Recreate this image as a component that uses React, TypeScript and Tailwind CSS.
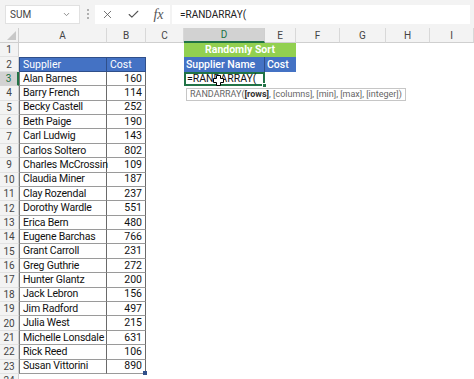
import React from "react";
import { X, Check, ChevronDown } from "lucide-react";

const suppliers: [string, number][] = [
  ["Alan Barnes", 160],
  ["Barry French", 114],
  ["Becky Castell", 252],
  ["Beth Paige", 190],
  ["Carl Ludwig", 143],
  ["Carlos Soltero", 802],
  ["Charles McCrossin", 109],
  ["Claudia Miner", 187],
  ["Clay Rozendal", 237],
  ["Dorothy Wardle", 551],
  ["Erica Bern", 480],
  ["Eugene Barchas", 766],
  ["Grant Carroll", 231],
  ["Greg Guthrie", 272],
  ["Hunter Glantz", 200],
  ["Jack Lebron", 156],
  ["Jim Radford", 497],
  ["Julia West", 215],
  ["Michelle Lonsdale", 631],
  ["Rick Reed", 106],
  ["Susan Vittorini", 890],
];

const columns = ["A", "B", "C", "D", "E", "F", "G", "H", "I"];

const font = { fontFamily: "Roboto, 'Liberation Sans', Arial, sans-serif" };

const RowHead = ({ n, active }: { n: number; active?: boolean }) => (
  <div
    className={
      active
        ? "h-[14.4px] flex items-center justify-center bg-[#d2d2d2] text-[#217346] text-[10px] border-r-2 border-r-[#217346] border-b border-b-[#d4d4d4]"
        : "h-[14.4px] flex items-center justify-center bg-[#f3f3f3] text-[#444] text-[10px] border-r border-r-[#cfcfcf] border-b border-b-[#e2e2e2]"
    }
  >
    {n}
  </div>
);

const Empty = () => <div className="h-[14.4px]" />;

function PlusCursor() {
  return (
    <svg width="11" height="11" viewBox="0 0 11 11" className="absolute left-[27px] top-[1px]">
      <path
        d="M3.5 0.5h4v3h3v4h-3v3h-4v-3h-3v-4h3z"
        fill="#fff"
        stroke="#000"
        strokeWidth="1"
      />
    </svg>
  );
}

export default function App() {
  return (
    <div className="w-[474px] h-[379px] overflow-hidden bg-white text-[#111] whitespace-nowrap" style={font}>
      {/* formula bar */}
      <div className="h-[28px] bg-[#f3f3f3] flex items-center pl-[5px] pr-[4px]">
        <div className="w-[75px] h-[19px] bg-white border border-[#e1e1e1] flex items-center justify-between pl-[4px] pr-[8px] text-[10px] text-[#444]">
          <span>SUM</span>
          <ChevronDown size={9} strokeWidth={2.5} className="text-[#888]" />
        </div>
        <div className="w-[15px] flex flex-col items-center gap-[2px]">
          <span className="w-[2px] h-[2px] bg-[#b0b0b0]" />
          <span className="w-[2px] h-[2px] bg-[#b0b0b0]" />
          <span className="w-[2px] h-[2px] bg-[#b0b0b0]" />
        </div>
        <div className="w-[75px] h-[19px] bg-white flex items-center justify-around text-[#555]">
          <X size={13} strokeWidth={1.5} />
          <Check size={13} strokeWidth={2} />
          <span className="italic text-[14px] text-[#555]" style={{ fontFamily: "'Liberation Serif', serif" }}>
            fx
          </span>
        </div>
        <div className="ml-[2px] flex-1 h-[19px] bg-white flex items-center pl-[8px] text-[10px] text-[#222]">
          =RANDARRAY(
        </div>
      </div>

      {/* sheet */}
      <div className="relative grid grid-cols-[19px_88px_39px_38px_81px_31px_44px_46px_44px_44px]">
        {/* column headers */}
        <div className="h-[15px] bg-[#f3f3f3] border-r border-b border-[#cfcfcf] relative overflow-hidden">
          <div className="absolute right-[2px] bottom-[2px] w-0 h-0 border-l-[9px] border-l-transparent border-b-[9px] border-b-[#c8c8c8]" />
        </div>
        {columns.map((c) =>
          c === "D" ? (
            <div
              key={c}
              className="h-[15px] flex items-center justify-center bg-[#d2d2d2] text-[#217346] text-[10px] border-r border-r-[#cfcfcf] border-b-2 border-b-[#217346]"
            >
              {c}
            </div>
          ) : (
            <div
              key={c}
              className="h-[15px] flex items-center justify-center bg-[#f3f3f3] text-[#444] text-[10px] border-r border-r-[#d8d8d8] border-b border-b-[#cfcfcf]"
            >
              {c}
            </div>
          )
        )}

        {/* row 1 */}
        <RowHead n={1} />
        <Empty />
        <Empty />
        <Empty />
        <div className="col-span-2 h-[14.4px] bg-[#92d050] text-white font-bold text-[10.5px] flex items-center justify-center">
          Randomly Sort
        </div>
        <Empty />
        <Empty />
        <Empty />
        <Empty />

        {/* row 2 */}
        <RowHead n={2} />
        <div className="h-[14.4px] bg-[#4472c4] text-white text-[10.5px] flex items-center pl-[3px] border-l border-t border-r border-b border-[#2f4f8a]">
          Supplier
        </div>
        <div className="h-[14.4px] bg-[#4472c4] text-white text-[10.5px] flex items-center pl-[3px] border-t border-r border-b border-[#2f4f8a]">
          Cost
        </div>
        <Empty />
        <div className="h-[14.4px] bg-[#4472c4] text-white font-medium text-[10.5px] flex items-center pl-[2px] border-r border-[#2f4f8a]">
          Supplier Name
        </div>
        <div className="h-[14.4px] bg-[#4472c4] text-white font-medium text-[10.5px] flex items-center pl-[2px]">
          Cost
        </div>
        <Empty />
        <Empty />
        <Empty />
        <Empty />

        {suppliers.map(([name, cost], i) => {
          const row = i + 3;
          return (
            <React.Fragment key={name}>
              <RowHead n={row} active={row === 3} />
              <div className="h-[14.4px] flex items-center pl-[3px] text-[10.5px] tracking-[-0.2px] border-l border-r border-b border-l-[#7a7a7a] border-r-[#6a6a6a] border-b-[#9a9a9a]">
                {name}
              </div>
              <div className="relative h-[14.4px] flex items-center justify-end pr-[3px] text-[10.5px] border-r border-b border-r-[#6a6a6a] border-b-[#9a9a9a]">
                {cost}
                {row === 23 && <span className="absolute right-[-2px] bottom-[-2px] w-[4px] h-[4px] bg-[#2f4f8a]" />}
              </div>
              <Empty />
              {row === 3 ? (
                <div className="relative h-[14.4px] flex items-center pl-[1px] text-[10.5px] border-2 border-[#217346]">
                  =RANDARRAY(
                  <PlusCursor />
                  <span className="absolute right-[-4px] bottom-[-4px] w-[5px] h-[5px] bg-[#217346] border border-white" />
                </div>
              ) : (
                <Empty />
              )}
              <Empty />
              <Empty />
              <Empty />
              <Empty />
              <Empty />
            </React.Fragment>
          );
        })}

        {/* row 24 partial */}
        <RowHead n={24} />

        {/* function tooltip */}
        <div className="absolute left-[186px] top-[60px] h-[13px] px-[3px] flex items-center bg-white border border-[#c6c6c6] text-[9px] text-[#666]">
          RANDARRAY(<span className="font-bold text-[#333]">[rows]</span>, [columns], [min], [max], [integer])
        </div>
      </div>
    </div>
  );
}
